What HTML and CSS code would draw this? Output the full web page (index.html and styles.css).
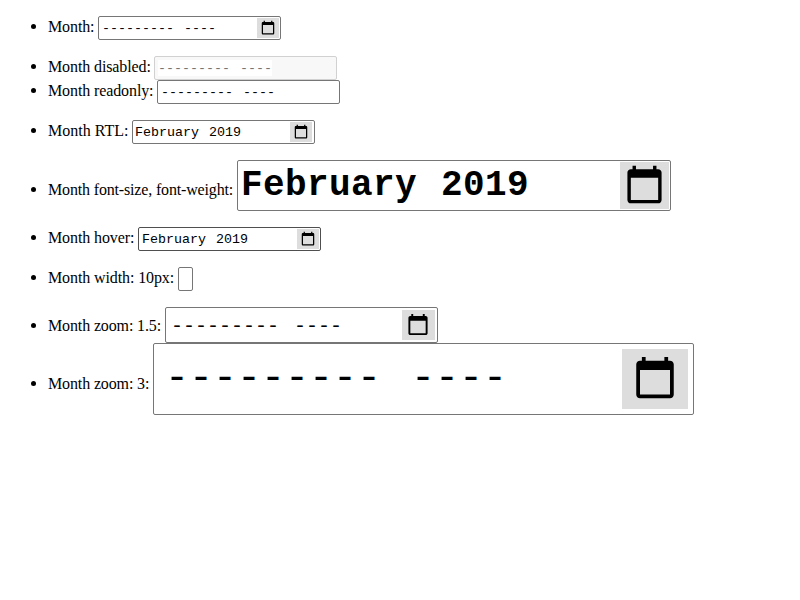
FILE: index.html
```html
<!DOCTYPE html>
<html lang="en">
<head>
<meta charset="utf-8">
<title>Month controls</title>
<link rel="stylesheet" href="styles.css">
</head>
<body>
<svg width="0" height="0" class="defs"><symbol id="calendar" viewBox="0 0 24 24"><path d="M20 3h-1V1h-2v2H7V1H5v2H4c-1.1 0-2 .9-2 2v16c0 1.1.9 2 2 2h16c1.1 0 2-.9 2-2V5c0-1.1-.9-2-2-2zm0 18H4V8h16v13z"/></symbol></svg>
<ul>
<li class="row-month"><span class="label">Month:</span><div class="field"><span class="value"><span>---------</span><span>----</span></span><span class="picker"><svg><use href="#calendar"/></svg></span></div></li>
</ul>
<ul>
<li class="row-disabled"><span class="label">Month disabled:</span><div class="field disabled"><span class="value"><span>---------</span><span>----</span></span></div></li>
<li class="row-readonly"><span class="label">Month readonly:</span><div class="field"><span class="value"><span>---------</span><span>----</span></span></div></li>
</ul>
<ul>
<li class="row-rtl"><span class="label">Month RTL:</span><div class="field rtl"><span class="value"><span>February</span><span>2019</span></span><span class="picker"><svg><use href="#calendar"/></svg></span></div></li>
</ul>
<ul>
<li class="row-large"><span class="label">Month font-size, font-weight:</span><div class="field large"><span class="value"><span>February</span><span>2019</span></span><span class="picker"><svg><use href="#calendar"/></svg></span></div></li>
</ul>
<ul>
<li class="row-hover"><span class="label">Month hover:</span><div class="field hover"><span class="value"><span>February</span><span>2019</span></span><span class="picker"><svg><use href="#calendar"/></svg></span></div></li>
</ul>
<ul>
<li class="row-narrow"><span class="label">Month width: 10px:</span><div class="field narrow"></div></li>
</ul>
<ul>
<li class="row-medium"><span class="label">Month zoom: 1.5:</span><div class="field medium"><span class="value"><span>---------</span><span>----</span></span><span class="picker"><svg><use href="#calendar"/></svg></span></div></li>
<li class="row-big"><span class="label">Month zoom: 3:</span><div class="field big"><span class="value"><span>---------</span><span>----</span></span><span class="picker"><svg><use href="#calendar"/></svg></span></div></li>
</ul>
</body>
</html>
```
FILE: styles.css
```css
* { box-sizing: border-box; }
body { margin: 16px 8px; background: #fff; color: #000; font-family: "Liberation Serif", serif; font-size: 16px; }
.defs { display: none; }
ul { list-style: none; margin: 0 0 16px; padding: 0 0 0 23px; }
li { display: flex; align-items: flex-start; --label-top: 2px; }
li::before { content: ""; flex: none; width: 5px; height: 5px; margin: calc(var(--label-top) + 6px) 12px 0 0; border-radius: 50%; background: #000; }
.label { flex: none; padding-top: var(--label-top); line-height: 18px; white-space: nowrap; letter-spacing: -.11px; }
.row-month .label { width: 50px; }
.row-disabled .label { width: 106px; }
.row-readonly .label { width: 109px; }
.row-rtl .label { width: 84px; letter-spacing: 0; }
.row-large .label { width: 189px; letter-spacing: -.16px; }
.row-hover .label { width: 90px; }
.row-narrow .label { width: 130px; }
.row-medium .label { width: 117px; letter-spacing: -.13px; }
.row-big .label { width: 105px; letter-spacing: -.13px; }
.row-large { --label-top: 21px; }
.row-medium { --label-top: 10px; }
.row-big { --label-top: 32px; }

.field { display: flex; flex: none; justify-content: space-between; align-items: center; width: 183px; height: 24px; padding: 1px 1px 1px 3px; border: 1px solid #767676; border-radius: 2px; background: #fff; font: 13.3333px/14px "Liberation Mono", monospace; }
.value { display: flex; gap: 10px; padding: 2px 0 0; white-space: pre; }
.picker { display: flex; align-items: flex-start; width: 22px; height: 20px; padding: 2px 0 0 3px; background: #ddd; }
.picker svg { width: 16px; height: 15px; }
.disabled { border-color: #d1d1d1; background: #f8f8f8; color: #757575; }
.disabled .value { background: #fff; }
.rtl { padding: 1px 2px; }
.narrow { width: 15px; }
.hover { border-color: #4f4f4f; }
.large { width: 434px; height: 51px; font-size: 36px; line-height: 41px; font-weight: bold; letter-spacing: .4px; }
.large .value { gap: 24px; padding: 0; }
.large .picker { width: 49px; height: 47px; padding: 2px 0 0 4px; }
.large .picker svg { width: 41px; height: 41px; }
.medium { width: 273px; height: 36px; padding: 2px 2px 2px 5px; font-size: 20px; line-height: 24px; }
.medium .value { gap: 15px; padding: 4px 0 0; }
.medium .picker { width: 33px; height: 30px; padding: 3px 0 0 4px; }
.medium .picker svg { width: 24px; height: 23px; }
.big { width: 541px; height: 72px; padding: 5px 5px 5px 11px; font-size: 40px; line-height: 48px; }
.big .value { gap: 30px; padding: 0; }
.big .picker { width: 66px; height: 60px; padding: 6px 0 0 9px; }
.big .picker svg { width: 48px; height: 45px; }
```
